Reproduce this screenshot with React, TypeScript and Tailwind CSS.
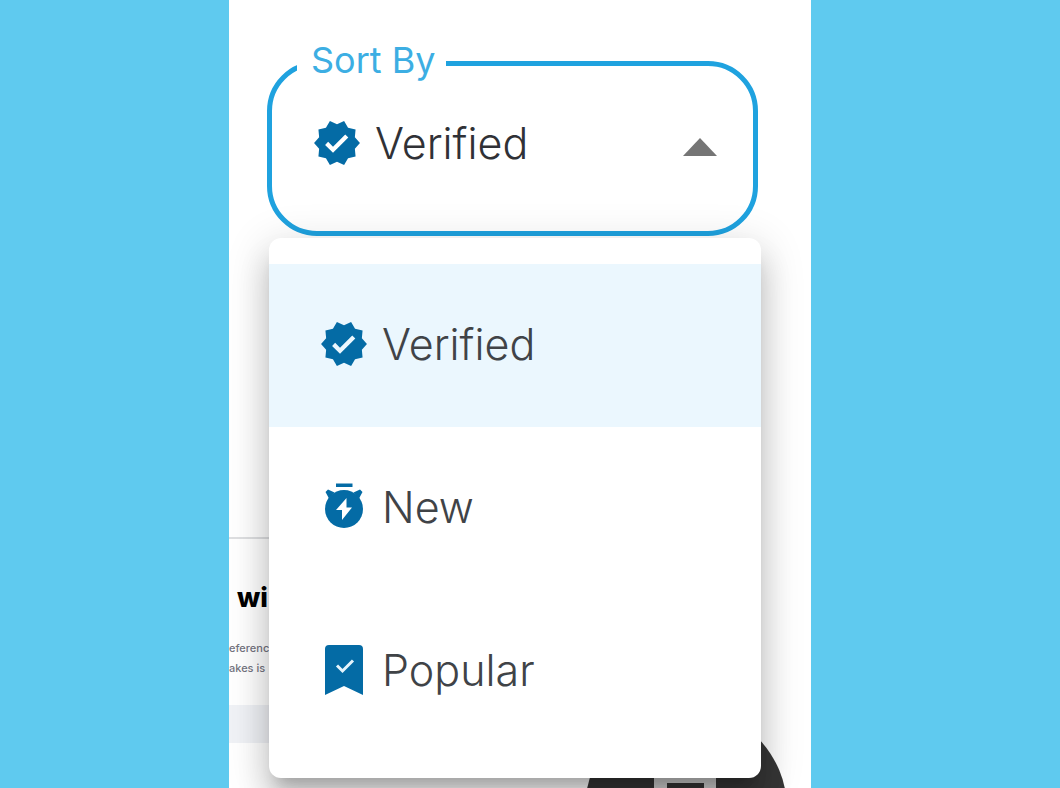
import { useState } from "react";
import type { ReactNode } from "react";
import { MdVerified } from "react-icons/md";

function TimerFlash() {
  return (
    <svg viewBox="0 0 48 48" className="size-12" aria-hidden="true">
      <path d="M16 .5h16.500v3.500H16Z" fill="currentColor" />
      <path d="m5.500 9 2.500-2.500 6.500 3-5.500 6Zm37 0L40 6.500l-6.500 3 5.500 6Z" fill="currentColor" />
      <circle cx="24" cy="26" r="19" fill="currentColor" />
      <path d="M26.500 15v9.500H32L22 37V27h-6Z" fill="#fff" />
    </svg>
  );
}

function BookmarkCheck() {
  return (
    <svg viewBox="0 0 48 52" className="h-[52px] w-12" aria-hidden="true">
      <path
        d="M9 1h30a4 4 0 0 1 4 4v46L24 42 5 51V5a4 4 0 0 1 4-4Z"
        fill="currentColor"
      />
      <path d="m17 21.500 5.500 5.500L33 16.500" fill="none" stroke="#e5f4fc" strokeWidth="3" />
    </svg>
  );
}

type Option = { name: string; icon: ReactNode };

const options: Option[] = [
  { name: "Verified", icon: <MdVerified size={48} viewBox="0.5 0.5 23 23" /> },
  { name: "New", icon: <TimerFlash /> },
  { name: "Popular", icon: <BookmarkCheck /> },
];

function SortSelect() {
  const [selected, setSelected] = useState(0);
  const [open, setOpen] = useState(true);

  return (
    <div className="relative z-10 mr-[53px] ml-[38px]">
      <fieldset className="min-w-0 rounded-[50px] border-[5px] border-[#1fa2df]">
        <legend className="ml-[25px] pr-2.5 pb-1.5 pl-3.5 text-[36px] leading-[48px] text-[#3caee3]">
          <span id="sort-label">Sort By</span>
        </legend>
        <button
          type="button"
          aria-labelledby="sort-label sort-value"
          aria-haspopup="listbox"
          aria-expanded={open}
          onClick={() => setOpen(!open)}
          className="flex w-full items-center gap-3.5 pt-[29px] pr-[36px] pb-16 pl-[41px] text-left outline-none"
        >
          <span className="shrink-0 text-[#046ba5]">{options[selected].icon}</span>
          <span id="sort-value" className="flex-1 text-[43px] leading-[48px] font-light text-[#303136]">
            {options[selected].name}
          </span>
          <svg viewBox="0 0 34 18" className="mt-2 h-[18px] w-[34px]" aria-hidden="true">
            <path d="M17 0 34 18H0Z" fill="#757575" />
          </svg>
        </button>
      </fieldset>
      {open && (
        <ul
          role="listbox"
          aria-labelledby="sort-label"
          className="absolute top-full right-[-3px] left-[2px] mt-0.5 overflow-hidden rounded-[12px] bg-white pt-[26px] pb-[25px] shadow-[0_15px_15px_-9px_rgba(0,0,0,0.2),0_24px_30px_3px_rgba(0,0,0,0.14),0_9px_42px_6px_rgba(0,0,0,0.12)]"
        >
          {options.map((option, index) => (
            <li key={option.name} role="presentation">
              <button
                type="button"
                role="option"
                aria-selected={index === selected}
                onClick={() => setSelected(index)}
                className={
                  "flex h-[163px] w-full items-center gap-3.5 pb-1 pl-[51px] text-left " +
                  (index === selected ? "bg-[#ebf7fe]" : "bg-white")
                }
              >
                <span className="shrink-0 text-[#046ba5]">{option.icon}</span>
                <span className="text-[43px] leading-[48px] font-light text-[#404347]">{option.name}</span>
              </button>
            </li>
          ))}
        </ul>
      )}
    </div>
  );
}

export default function App() {
  return (
    <div className="grid h-screen grid-cols-[229fr_582fr_249fr] overflow-hidden bg-[#5fcaef] font-['Inter','Liberation_Sans',sans-serif]">
      <main className="relative col-start-2 h-full overflow-hidden bg-white pt-9">
        <SortSelect />
        <section className="mt-[301px] mr-[53px] border-t-2 border-[#dedfe1] pt-[43px]">
          <h2 className="pl-2 text-[27px] leading-8 font-extrabold text-black">wi</h2>
          <p className="mt-6 text-[11px] leading-5 font-medium whitespace-nowrap text-[#74747f]">
            eferenc
            <br />
            akes is
          </p>
          <div className="mt-[27px] h-[38px] bg-[#f0f2f6]" />
        </section>
        <button
          type="button"
          aria-label="Open chat"
          className="absolute bottom-[-122px] left-[356px] h-[202px] w-[202px] rounded-full bg-[#363636]"
        >
          <svg viewBox="0 0 202 202" aria-hidden="true">
            <path d="M69 60h62v60H69Z" fill="#d0d0d0" />
            <path d="M82 75h37v40H82Z" fill="#363636" />
          </svg>
        </button>
      </main>
    </div>
  );
}
